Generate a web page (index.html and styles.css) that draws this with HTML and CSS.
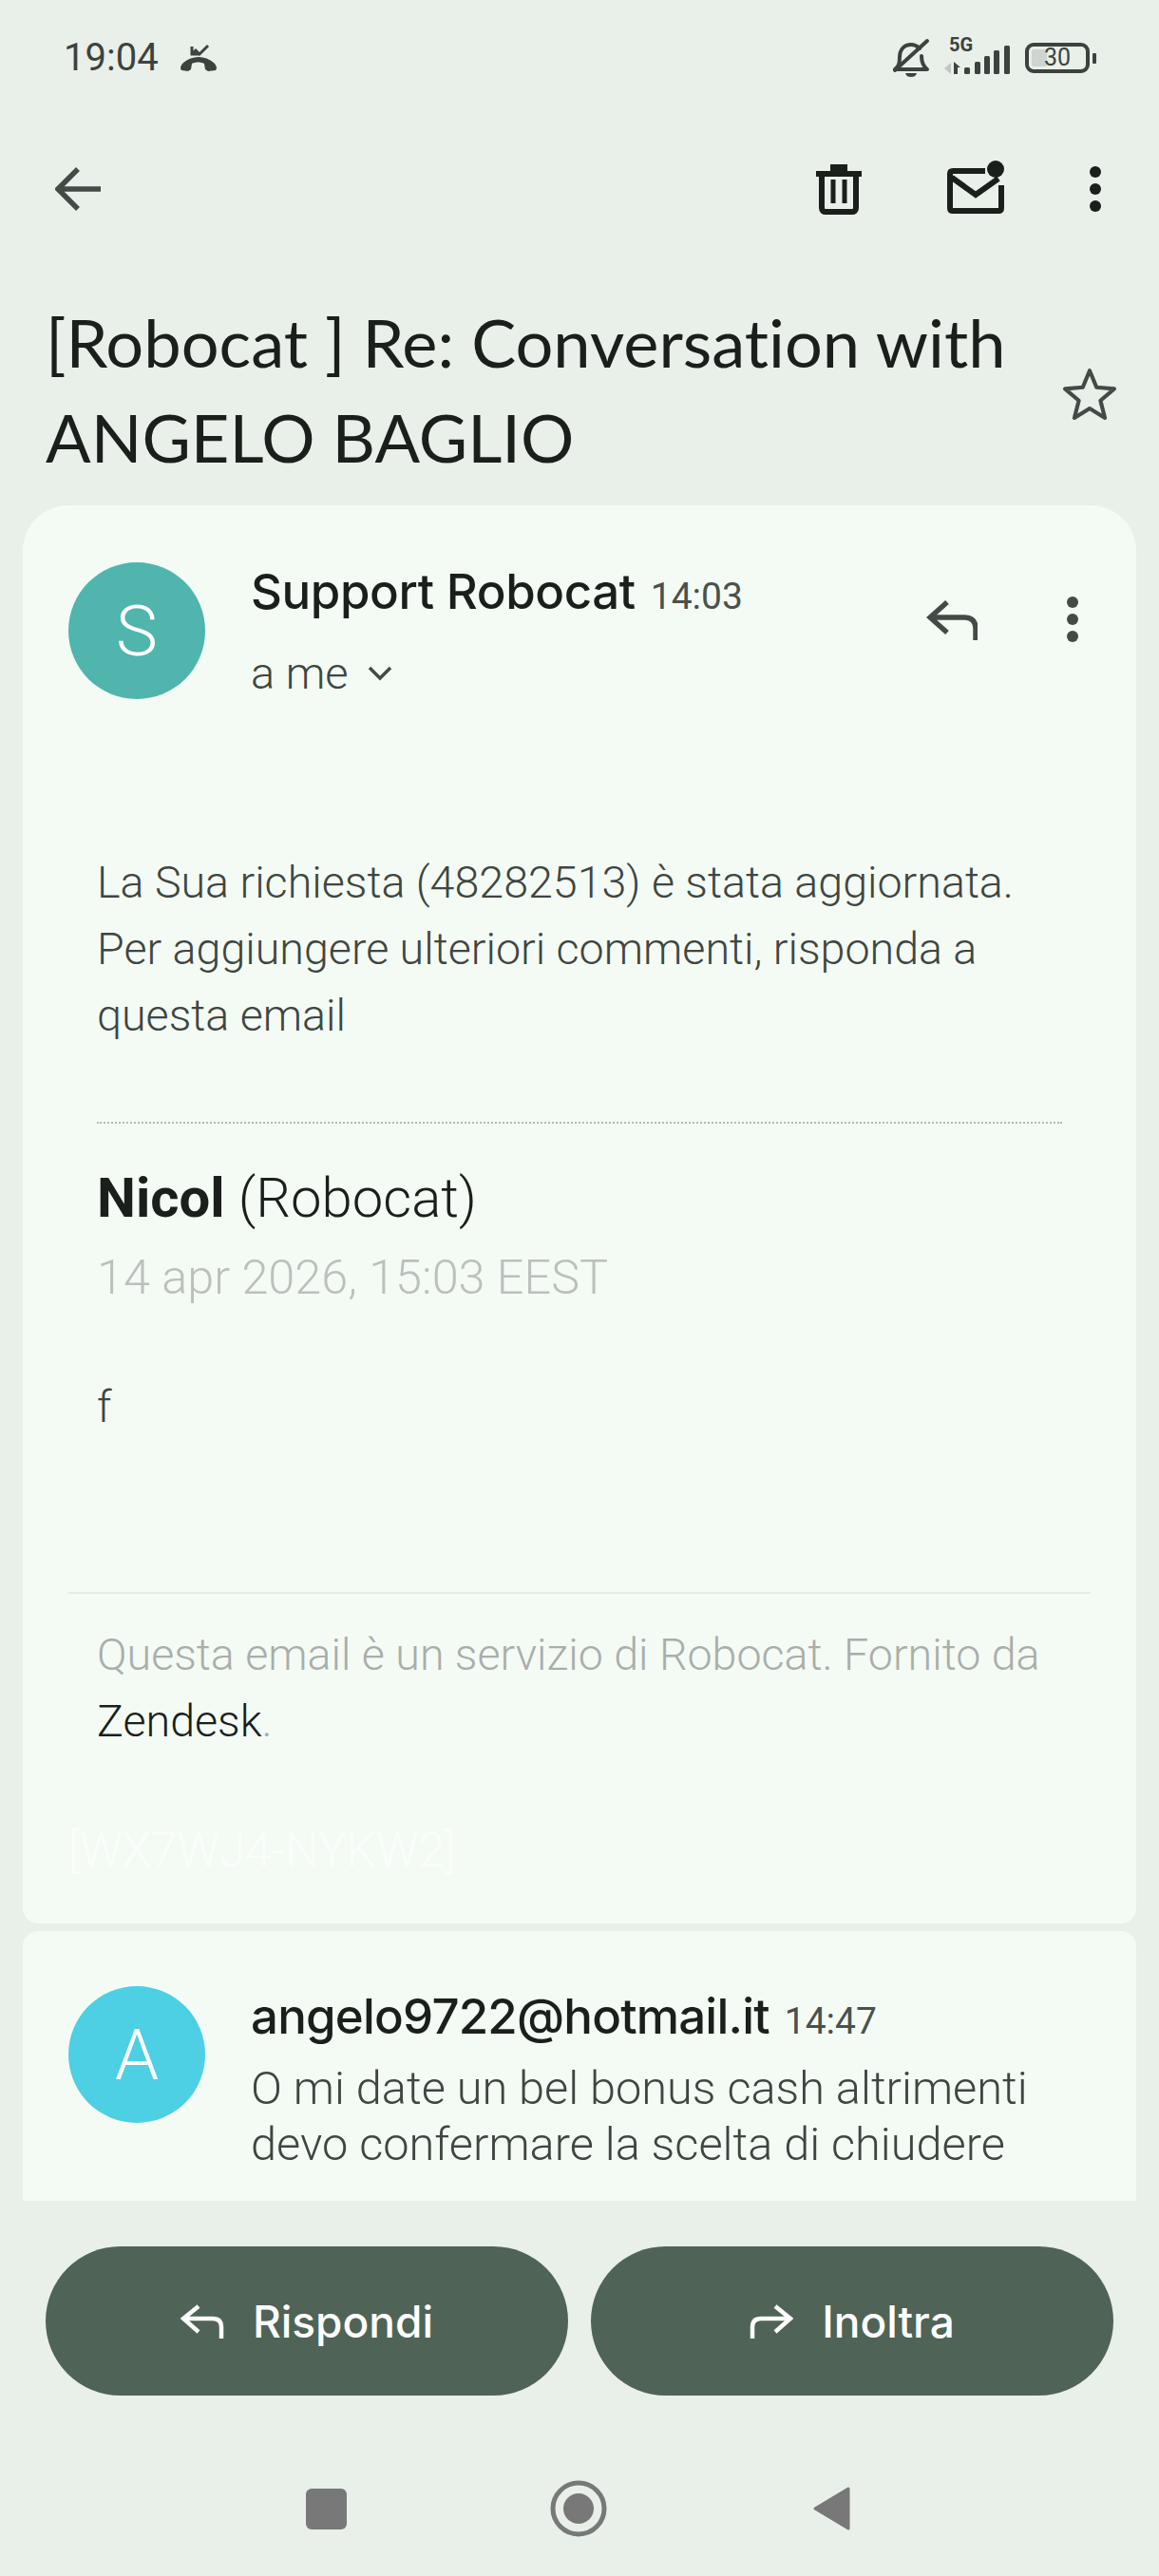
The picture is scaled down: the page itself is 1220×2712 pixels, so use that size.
FILE: index.html
```html
<!DOCTYPE html>
<html lang="it">

<head>
    <meta charset="UTF-8">
    <meta name="viewport" content="width=device-width, initial-scale=1.0">
    <title>Robocat</title>
    <link rel="stylesheet" href="styles.css">
</head>

<body>
    <div class="status">
        <div class="status-left">
            <span class="clock">19:04</span>
            <svg class="ic-call" viewBox="0 0 40 30"><path d="M1 26c0-2 1-4 3-6 9-8 23-8 32 0 2 2 3 4 3 6l-1 2-8 1-3-2-1-6c-4-2-9-2-13 0l-1 6-3 2-7-1z" fill="#3c423e"/><path d="M13 3v8h8M13 11l4-4 4 4 9-9" fill="none" stroke="#3c423e" stroke-width="3"/></svg>
        </div>
        <div class="status-right">
            <svg class="ic-bell" viewBox="0 0 40 42"><path d="M3 33c4-3 5-6 5-13 0-8 5-13 12-13 4 0 7 2 9 4M31 19c0 7 2 11 6 14H3" fill="none" stroke="#3c423e" stroke-width="4" stroke-linecap="round" stroke-linejoin="round"/><path d="M3 34 37 3" stroke="#3c423e" stroke-width="4" stroke-linecap="round"/><path d="M14 37h12c-1 3-3 4-6 4s-5-1-6-4z" fill="#3c423e"/></svg>
            <div class="net">
                <span class="net-label">5G</span>
                <svg class="ic-signal" viewBox="0 0 70 32"><path d="M0 25l7-6v12z" fill="#c2c6c3"/><path d="M10 18l7 6h-3v7h-4z" fill="#3c423e"/><rect x="21" y="24" width="6" height="7" rx="1.5" fill="#3c423e"/><rect x="32" y="18" width="6" height="13" rx="1.5" fill="#3c423e"/><rect x="42" y="12" width="6" height="19" rx="1.5" fill="#3c423e"/><rect x="52" y="6" width="6" height="25" rx="1.5" fill="#3c423e"/><rect x="63" y="1" width="6" height="30" rx="1.5" fill="#3c423e"/></svg>
            </div>
            <div class="battery">
                <span class="battery-fill"></span>
                <span class="battery-num">30</span>
            </div>
            <span class="battery-tip"></span>
        </div>
    </div>

    <div class="appbar">
        <svg class="ic-back" viewBox="0 0 48 46"><path d="M24 2 3 23l21 21M3 23h45" fill="none" stroke="#444b46" stroke-width="5.500"/></svg>
        <div class="appbar-actions">
            <svg class="ic-trash" viewBox="0 0 48 54"><path d="M0 8h48v6H0zM15 1h18v7H15z" fill="#1b1f1c"/><path d="M6 12v35c0 3 2 4 4 4h28c2 0 4-1 4-4V12" fill="none" stroke="#1b1f1c" stroke-width="6"/><path d="M18 17v25M30 17v25" stroke="#1b1f1c" stroke-width="5"/></svg>
            <svg class="ic-mail" viewBox="0 0 62 56"><path d="M40 11H6c-2 0-3 1-3 3v36c0 2 1 3 3 3h48c2 0 3-1 3-3V26" fill="none" stroke="#1b1f1c" stroke-width="6"/><path d="M5 18l25 18 24-17" fill="none" stroke="#1b1f1c" stroke-width="6"/><circle cx="51" cy="9" r="9" fill="#1b1f1c"/></svg>
            <svg class="ic-dots" viewBox="0 0 14 48"><circle cx="7" cy="6" r="6" fill="#1b1f1c"/><circle cx="7" cy="24" r="6" fill="#1b1f1c"/><circle cx="7" cy="42" r="6" fill="#1b1f1c"/></svg>
        </div>
    </div>

    <div class="subject">
        <h1 class="subject-text">[Robocat ] Re: Conversation with ANGELO BAGLIO</h1>
        <svg class="ic-star" viewBox="0 0 56 54"><path d="m28 4 7 17 18 1.500-14 12 4.500 17.500L28 42.500 12.500 52 17 34.500 3 22.500 21 21z" fill="none" stroke="#444b46" stroke-width="4" stroke-linejoin="round"/></svg>
    </div>

    <div class="thread">
        <div class="card card-open">
            <div class="msg-head">
                <div class="avatar avatar-s">S</div>
                <div class="msg-meta">
                    <div class="msg-from"><span class="sender">Support Robocat</span> <span class="msg-time">14:03</span></div>
                    <div class="msg-to">a me
                        <svg class="ic-chevron" viewBox="0 0 26 16"><path d="m2 2 11 11L24 2" fill="none" stroke="#444b46" stroke-width="3.500"/></svg>
                    </div>
                </div>
                <svg class="ic-reply" viewBox="0 0 54 42"><path d="M22 2 4 18l18 16M4 18h36c8 0 12 4 12 12v12" fill="none" stroke="#444b46" stroke-width="5.500"/></svg>
                <svg class="ic-dots-sm" viewBox="0 0 14 48"><circle cx="7" cy="6" r="6" fill="#444b46"/><circle cx="7" cy="24" r="6" fill="#444b46"/><circle cx="7" cy="42" r="6" fill="#444b46"/></svg>
            </div>

            <div class="msg-body">
                <p class="notice">La Sua richiesta (48282513) è stata aggiornata.<br>Per aggiungere ulteriori commenti, risponda a<br>questa email</p>
                <div class="dotted"></div>
                <div class="author"><b>Nicol</b> (Robocat)</div>
                <div class="stamp">14 apr 2026, 15:03 EEST</div>
                <div class="comment">f</div>
            </div>

            <div class="rule"></div>
            <p class="footer">Questa email è un servizio di Robocat. Fornito da<br><span class="footer-link">Zendesk</span>.</p>
            <div class="hidden-id">[WX7WJ4-NYKW2]</div>
        </div>

        <div class="card card-next">
            <div class="avatar avatar-a">A</div>
            <div class="msg-meta">
                <div class="msg-from"><span class="sender sender-mail">angelo9722@hotmail.it</span> <span class="msg-time">14:47</span></div>
                <p class="snippet">O mi date un bel bonus cash altrimenti<br>devo confermare la scelta di chiudere</p>
            </div>
        </div>
    </div>

    <div class="actions">
        <div class="action">
            <svg class="ic-action" viewBox="0 0 46 36"><path d="M19 2 3 15l16 14M3 15h31c6 0 9 3 9 9v12" fill="none" stroke="#fff" stroke-width="4.500"/></svg>
            <span>Rispondi</span>
        </div>
        <div class="action">
            <svg class="ic-action" viewBox="0 0 46 36"><path d="m27 2 16 13-16 14M43 15H12c-6 0-9 3-9 9v12" fill="none" stroke="#fff" stroke-width="4.500"/></svg>
            <span>Inoltra</span>
        </div>
    </div>

    <div class="navbar">
        <span class="nav-square"></span>
        <svg class="nav-home" viewBox="0 0 60 60"><circle cx="30" cy="30" r="27" fill="none" stroke="#787878" stroke-width="5"/><circle cx="30" cy="30" r="16" fill="#787878"/></svg>
        <svg class="nav-back" viewBox="0 0 40 48"><path d="M38 3v42L3 24z" fill="#787878" stroke="#787878" stroke-width="3" stroke-linejoin="round"/></svg>
    </div>
</body>

</html>
```

FILE: styles.css
```css
* {
    margin: 0;
    padding: 0;
    box-sizing: border-box;
}

body {
    width: 1220px;
    height: 2712px;
    overflow: hidden;
    background: #e9efe9;
    font-family: Roboto, "Liberation Sans", sans-serif;
    color: #3f4641;
}

/* status bar */
.status {
    height: 122px;
    display: flex;
    justify-content: space-between;
    align-items: center;
    padding: 0 66px 0 67px;
}

.status-left {
    display: flex;
    align-items: center;
    gap: 22px;
}

.clock {
    font-size: 40px;
    line-height: 40px;
    color: #3c423e;
}

.ic-call {
    width: 40px;
    height: 30px;
}

.status-right {
    display: flex;
    align-items: center;
}

.ic-bell {
    width: 40px;
    height: 42px;
    margin-right: 15px;
}

.net {
    width: 70px;
    height: 36px;
    position: relative;
    margin-right: 15px;
}

.net-label {
    position: absolute;
    left: 5px;
    top: -6px;
    font-size: 20px;
    line-height: 20px;
    font-weight: 700;
    color: #3c423e;
}

.ic-signal {
    width: 70px;
    height: 32px;
    position: absolute;
    left: 0;
    top: 4px;
}

.battery {
    width: 68px;
    height: 32px;
    border: 4px solid #3c423e;
    border-radius: 9px;
    position: relative;
    text-align: center;
}

.battery-fill {
    position: absolute;
    left: 3px;
    top: 3px;
    width: 16px;
    height: 18px;
    background: #d0d4d0;
    border-radius: 2px;
}

.battery-num {
    position: relative;
    font-size: 25px;
    line-height: 24px;
    display: block;
    color: #3c423e;
}

.battery-tip {
    width: 4px;
    height: 11px;
    margin-left: 3px;
    background: #3c423e;
    border-radius: 1px;
}

/* top bar */
.appbar {
    height: 152px;
    display: flex;
    justify-content: space-between;
    align-items: center;
    padding: 2px 60px 0 58px;
}

.ic-back {
    width: 48px;
    height: 46px;
}

.appbar-actions {
    display: flex;
    align-items: center;
}

.ic-trash {
    width: 48px;
    height: 54px;
    margin-right: 90px;
}

.ic-mail {
    width: 62px;
    height: 56px;
    margin-right: 87px;
    margin-top: -4px;
}

.ic-dots {
    width: 14px;
    height: 48px;
}

.subject {
    height: 258px;
    display: flex;
    justify-content: space-between;
    align-items: flex-start;
    padding: 36px 44px 0 48px;
}

.subject-text {
    width: 1040px;
    font-family: Lato, sans-serif;
    font-size: 70.400px;
    font-weight: 400;
    font-variant-ligatures: none;
    line-height: 100px;
    color: #1b1f1c;
}

.ic-star {
    width: 58px;
    height: 56px;
    margin-top: 76px;
}

/* mail cards */
.thread {
    height: 1785px;
    margin: 0 24px;
    overflow: hidden;
}

.card {
    background: #f4fbf5;
}

.card-open {
    height: 1493px;
    border-radius: 48px 48px 16px 16px;
    padding: 60px 0 0 48px;
    margin-bottom: 8px;
}

.msg-head {
    display: flex;
    align-items: flex-start;
}

.avatar {
    width: 144px;
    height: 144px;
    flex: none;
    border-radius: 50%;
    display: flex;
    align-items: center;
    justify-content: center;
    color: #fff;
    font-size: 74px;
    font-weight: 300;
}

.avatar-s {
    background: #4fb5ad;
}

.avatar-a {
    background: #4dcfe4;
}

.msg-meta {
    margin-left: 48px;
    flex: 1;
}

.msg-from {
    white-space: nowrap;
    line-height: 62px;
}

.sender {
    font-family: Inter, sans-serif;
    font-size: 51px;
    font-weight: 500;
    letter-spacing: -0.4px;
    color: #1b1f1c;
}

.sender-mail {
    letter-spacing: -0.8px;
}

.msg-time {
    font-size: 39px;
    margin-left: 12px;
    color: #4a514c;
}

.msg-to {
    display: flex;
    align-items: center;
    gap: 20px;
    font-size: 47px;
    font-weight: 300;
    line-height: 60px;
    margin-top: 12px;
}

.ic-chevron {
    width: 26px;
    height: 16px;
}

.ic-reply {
    width: 54px;
    height: 42px;
    margin: 40px 93px 0 0;
}

.ic-dots-sm {
    width: 14px;
    height: 48px;
    margin: 36px 60px 0 0;
}

.msg-body {
    padding-left: 30px;
    width: 1046px;
}

.notice {
    margin-top: 155px;
    font-size: 46.600px;
    font-weight: 300;
    line-height: 70px;
}

.dotted {
    margin-top: 77px;
    border-top: 2px dotted #b4b8b5;
}

.author {
    margin-top: 43px;
    font-size: 58px;
    font-weight: 300;
    line-height: 70px;
    color: #1b1f1c;
}

.author b {
    font-weight: 700;
}

.stamp {
    margin-top: 14px;
    font-size: 50.400px;
    font-weight: 300;
    line-height: 70px;
    color: #bcc0bd;
}

.comment {
    margin-top: 66px;
    font-size: 46.600px;
    font-weight: 300;
    line-height: 70px;
}

.rule {
    margin: 160px 48px 0 0;
    border-top: 2px solid #e6ebe7;
}

.footer {
    margin: 29px 0 0 30px;
    font-size: 46.600px;
    font-weight: 300;
    line-height: 70px;
    color: #a9aeaa;
}

.footer-link {
    color: #1b1f1c;
}

.hidden-id {
    margin-top: 66px;
    font-size: 49.700px;
    font-weight: 300;
    line-height: 70px;
    color: #fafefb;
}

.card-next {
    height: 300px;
    border-radius: 16px 16px 0 0;
    padding: 58px 0 0 48px;
    display: flex;
    align-items: flex-start;
}

.card-next .msg-from {
    margin-top: 1px;
}

.snippet {
    margin-top: 2px;
    font-size: 48.700px;
    font-weight: 300;
    line-height: 59px;
}

/* bottom buttons */
.actions {
    margin-top: 48px;
    display: flex;
    gap: 24px;
    padding: 0 48px;
}

.action {
    flex: 1;
    height: 157px;
    border-radius: 79px;
    background: #4f6357;
    display: flex;
    align-items: center;
    justify-content: center;
    gap: 30px;
    font-family: Inter, sans-serif;
    font-size: 46px;
    font-weight: 500;
    color: #fff;
}

.ic-action {
    width: 46px;
    height: 36px;
}

/* nav bar */
.navbar {
    height: 238px;
    display: flex;
    align-items: center;
    justify-content: center;
    padding-right: 4px;
}

.nav-square {
    width: 43px;
    height: 43px;
    border-radius: 6px;
    background: #787878;
    margin-right: 214px;
}

.nav-home {
    width: 60px;
    height: 60px;
    margin-right: 216px;
}

.nav-back {
    width: 40px;
    height: 48px;
}
```
